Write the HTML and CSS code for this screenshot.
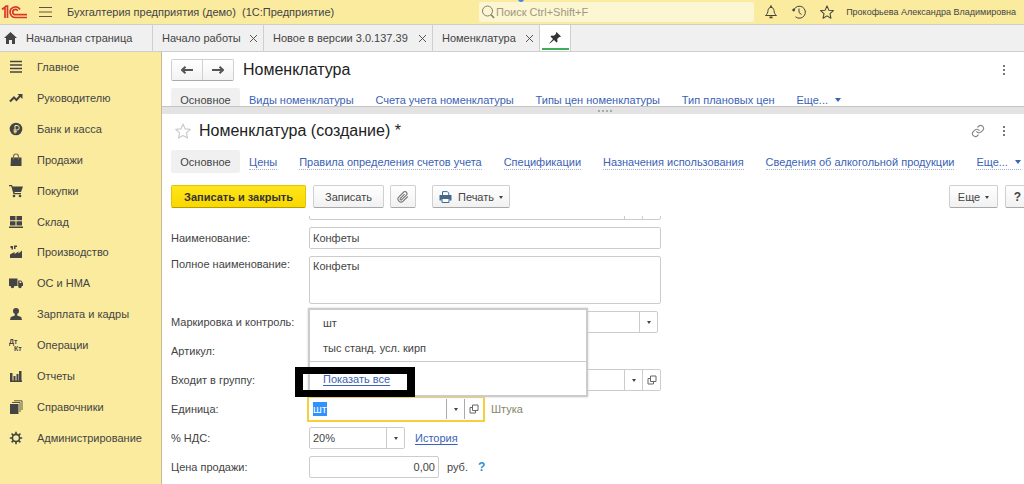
FILE: index.html
```html
<!DOCTYPE html>
<html lang="ru">
<head>
<meta charset="utf-8">
<title>Номенклатура (создание)</title>
<link rel="stylesheet" href="styles.css">
</head>
<body>
<svg class="defs" aria-hidden="true">
  <symbol id="open" viewBox="0 0 10 10"><path d="M3.500 1h5.500v5.500H3.500zM3.500 3.500H1V9h5.500V6.500" fill="none" stroke="#666" stroke-width="1"/></symbol>
  <symbol id="star" viewBox="0 0 16 16"><path d="M8 1l2.100 4.900 5.200.5-3.900 3.500 1.100 5.200L8 12.400l-4.500 2.700 1.100-5.200L.7 6.400l5.200-.5z" fill="none" stroke="currentColor" stroke-width="1.2" stroke-linejoin="round"/></symbol>
</svg>
<header class="topbar">
  <svg class="logo" viewBox="0 0 26 14" fill="none" stroke="#d9382b" stroke-width="1.700"><path d="M1 4.500l3-2.500v11M6.500 13V1.200H4.500"/><path d="M19 4.500A5.300 5.300 0 1 0 14.500 12.500H26"/><path d="M16.700 6A2.600 2.600 0 1 0 14.500 9.700H26"/></svg>
  <button class="plain" aria-label="Меню"><svg width="13" height="12" stroke="#5c573e" stroke-width="1"><path d="M0 1.500h13M0 6h13M0 10.500h13"/></svg></button>
  <span class="app-title">Бухгалтерия предприятия (демо)&nbsp; (1С:Предприятие)</span>
  <label class="search">
    <svg width="14" height="14" viewBox="0 0 14 14" fill="none" stroke="#85806a"><circle cx="6.500" cy="6" r="5"/><path d="M10 9.500l3 3.500" stroke-width="1.600"/></svg>
    <input type="text" placeholder="Поиск Ctrl+Shift+F" aria-label="Поиск">
    <i class="search-mark"></i>
  </label>
  <div class="top-icons">
    <button class="plain" aria-label="Уведомления"><svg width="14" height="14" viewBox="0 0 14 14" fill="none" stroke="#444"><path d="M1.500 10.500h11c-2-1.500-2.300-3-2.500-5C9.800 3.500 8.500 2.300 7 2.300S4.200 3.500 4 5.500c-.2 2-.5 3.500-2.500 5z"/><path d="M7 .5v2M5.500 12.300h3" stroke-width="1.800"/></svg></button>
    <button class="plain" aria-label="История"><svg width="14" height="14" viewBox="0 0 14 14" fill="none" stroke="#444"><path d="M2 4.500A6 6 0 1 1 3.500 11.800M7 3.500V7.500l2.500 2"/><circle cx="1.700" cy="5" r="1" fill="#444"/></svg></button>
    <button class="plain" aria-label="Избранное"><svg width="14" height="14"><use href="#star"/></svg></button>
  </div>
  <span class="user">Прокофьева Александра Владимировна</span>
</header>
<div class="tabs">
  <div class="tab tab-home"><svg width="13" height="12" viewBox="0 0 13 12" fill="#444"><path d="M6.500 0L0 6h2v6h3V8h3v4h3V6h2z"/></svg><span>Начальная страница</span></div>
  <div class="tab tab-start"><span>Начало работы</span><button class="close" aria-label="Закрыть"></button></div>
  <div class="tab tab-news"><span>Новое в версии 3.0.137.39</span><button class="close" aria-label="Закрыть"></button></div>
  <div class="tab tab-list"><span>Номенклатура</span><button class="close" aria-label="Закрыть"></button></div>
  <button class="tab tab-pin" aria-label="Закрепить"><svg width="12" height="12" viewBox="0 0 12 12"><path d="M7.500 0L12 4.500l-1 .6-.8-.2-2 2.200.3 2.400-1 1L5 8 .8 11.600.3 11.200 4 7 1.500 4.500l1-1 2.400.3 2.200-2L6.900.9z" fill="#333"/></svg></button>
</div>
<div class="body">
  <nav class="sidebar">
    <a href="#"><svg viewBox="0 0 14 14"><path d="M1 1.500h12M1 5h12M1 8.500h12M1 12h12" stroke="#444" stroke-width="1.400"/></svg>Главное</a>
    <a href="#"><svg viewBox="0 0 14 14"><path d="M1 10.500l4-4 2.500 2.500 4-4.500" fill="none" stroke="#444" stroke-width="2"/><path d="M8.500 3h5v5z"/></svg>Руководителю</a>
    <a href="#"><svg viewBox="0 0 14 14"><circle cx="7" cy="7" r="6.300"/><path d="M6 11.500v-8h2a2 2 0 0 1 0 4.500H4.500M4.500 9.800H8" fill="none" stroke="#faeb9e"/></svg>Банк и касса</a>
    <a href="#"><svg viewBox="0 0 14 14"><path d="M2 4.500h10.500V13h-11z"/><path d="M4.500 6.500V3.500a2.500 2.500 0 0 1 5 0v3" fill="none" stroke="#77704f" stroke-width="1.200"/></svg>Продажи</a>
    <a href="#"><svg viewBox="0 0 14 14"><path d="M0 1h3l.6 1.500H14L12 8H5.500l.2 1H12v1.200H4.500L2.300 2.200H0z"/><circle cx="5" cy="12" r="1.300"/><circle cx="11" cy="12" r="1.300"/></svg>Покупки</a>
    <a href="#"><svg viewBox="0 0 14 14"><path d="M1 1h5.500v4.200H1zM7.500 1H13v4.200H7.500zM1 6.200h5.500v4.300H1zM7.500 6.200H13v4.300H7.500zM0 11.500h14V13H0z"/></svg>Склад</a>
    <a href="#"><svg viewBox="0 0 14 14"><path d="M1 13V9.500l4.500-2.500v2L9.500 6.500v2L13 5.500V13zM1.500 1h2.500v3.500H2.500V3h-1zM5 .5h3v1.500H6.500V4H5z"/></svg>Производство</a>
    <a href="#"><svg viewBox="0 0 14 14"><path d="M0 2.500h8.500V10H0zM9.200 4.500h3L14 7v3H9.200z"/><path d="M10.500 5.500h1.300l.9 1.500h-2.200z" fill="#faeb9e"/><circle cx="3.500" cy="10.500" r="1.700"/><circle cx="11" cy="10.500" r="1.700"/></svg>ОС и НМА</a>
    <a href="#"><svg viewBox="0 0 14 14"><circle cx="7" cy="4" r="3"/><path d="M5.800 6h2.400v2.500l4 1.500.8 3H1l.8-3 4-1.500z"/></svg>Зарплата и кадры</a>
    <a href="#"><svg viewBox="0 0 14 14"><text class="entry-mark" x="0" y="6">Дт</text><text class="entry-mark" x="5" y="13">Кт</text></svg>Операции</a>
    <a href="#"><svg viewBox="0 0 14 14"><path d="M1 4h2.500v8H1zM4.500 7h2v5h-2zM7.500 5h2v7h-2zM10 2h2.500v10H10zM1 11.500h12V13H1z"/></svg>Отчеты</a>
    <a href="#"><svg viewBox="0 0 14 14"><path d="M1 4h8.500v10H1z"/><path d="M3 2.500h8V12M5 .8h8V10" fill="none" stroke="#5c573e" stroke-width="1"/></svg>Справочники</a>
    <a href="#"><svg viewBox="0 0 14 14"><circle cx="7" cy="7" r="3.600" fill="none" stroke="#444" stroke-width="1.600"/><path d="M7 .8v2.700M7 10.500v2.700M.8 7h2.700M10.500 7h2.700M2.600 2.600l2 2M9.400 9.400l2 2M2.600 11.400l2-2M9.400 4.600l2-2" stroke="#444" stroke-width="1.600"/></svg>Администрирование</a>
  </nav>
  <main class="main">
    <section class="list-pane">
      <div class="title-row">
        <div class="history-buttons">
          <button aria-label="Назад"><svg width="12" height="8" viewBox="0 0 12 8"><path d="M4.500.8L1 4l3.500 3.200M1 4h11" fill="none" stroke="#555" stroke-width="2"/></svg></button>
          <button aria-label="Вперед"><svg width="12" height="8" viewBox="0 0 12 8"><path d="M7.500.8L11 4 7.500 7.200M11 4H0" fill="none" stroke="#555" stroke-width="2"/></svg></button>
        </div>
        <h1>Номенклатура</h1>
        <button class="plain dots" aria-label="Еще"><i></i><i></i><i></i></button>
      </div>
      <div class="section-nav short">
        <span class="current">Основное</span>
        <div class="links">
          <a href="#">Виды номенклатуры</a><a href="#">Счета учета номенклатуры</a><a href="#">Типы цен номенклатуры</a><a href="#">Тип плановых цен</a><a href="#" class="more">Еще...<i class="caret"></i></a>
        </div>
      </div>
    </section>
    <div class="splitter"><i></i><i></i><i></i><i></i></div>
    <section class="item-pane">
      <div class="title-row">
        <button class="plain favorite" aria-label="В избранное"><svg width="16" height="16"><use href="#star"/></svg></button>
        <h1>Номенклатура (создание) *</h1>
        <button class="plain link-button" aria-label="Ссылка"><svg width="14" height="14" viewBox="0 0 24 24" fill="none" stroke="#888" stroke-width="2" stroke-linecap="round"><path d="M10 13a5 5 0 0 0 7.500.5l3-3a5 5 0 0 0-7-7l-1.700 1.700"/><path d="M14 11a5 5 0 0 0-7.500-.5l-3 3a5 5 0 0 0 7 7l1.700-1.700"/></svg></button>
        <button class="plain dots" aria-label="Еще"><i></i><i></i><i></i></button>
      </div>
      <div class="section-nav dotted">
        <span class="current">Основное</span>
        <div class="links">
          <a href="#">Цены</a><a href="#">Правила определения счетов учета</a><a href="#">Спецификации</a><a href="#">Назначения использования</a><a href="#">Сведения об алкогольной продукции</a><a href="#" class="more">Еще...<i class="caret"></i></a>
        </div>
      </div>
      <div class="toolbar">
        <button class="btn primary">Записать и закрыть</button>
        <button class="btn save">Записать</button>
        <button class="btn attach" aria-label="Прикрепить"><svg width="12" height="12" viewBox="0 0 24 24"><path d="M21.500 11l-9.200 9.200a6 6 0 0 1-8.500-8.500l9.200-9.200a4 4 0 0 1 5.700 5.700l-9.200 9.200a2 2 0 0 1-2.800-2.800l8.500-8.500" fill="none" stroke="#777" stroke-width="2.200"/></svg></button>
        <button class="btn print"><svg width="13" height="12" viewBox="0 0 13 12"><path d="M3.500 4V.6h4.800l1.500 1.500V4" fill="#fff" stroke="#416a8c"/><path d="M.5 4h12v5.500h-2V8h-8v1.500h-2z" fill="#416a8c"/><path d="M3 7.500h7v4H3z" fill="#fff" stroke="#416a8c"/></svg>Печать<i class="caret"></i></button>
        <button class="btn extra">Еще<i class="caret"></i></button>
        <button class="btn help">?</button>
      </div>
      <form class="form">
        <span></span><div class="field wide above"><input type="text" aria-label="Группа"><button type="button" aria-label="Выбрать"></button><button type="button" aria-label="Открыть"></button></div>
        <label for="name">Наименование:</label><div class="field wide"><input id="name" type="text" value="Конфеты"></div>
        <label for="full" class="top-label">Полное наименование:</label><div class="field wide tall"><textarea id="full">Конфеты</textarea></div>
        <label for="mark">Маркировка и контроль:</label><div class="field mark"><input id="mark" type="text"><button type="button" aria-label="Выбрать"><i class="caret"></i></button></div>
        <label for="art">Артикул:</label><div class="field art"><input id="art" type="text"></div>
        <label for="group">Входит в группу:</label><div class="field wide"><input id="group" type="text"><button type="button" aria-label="Выбрать"><i class="caret"></i></button><button type="button" aria-label="Открыть"><svg width="10" height="10"><use href="#open"/></svg></button></div>
        <label for="unit">Единица:</label>
        <div class="cell">
          <div class="unit-anchor">
            <div class="field unit"><label for="unit" class="selected">шт</label><input id="unit" type="text"><button type="button" aria-label="Выбрать"><i class="caret"></i></button><button type="button" aria-label="Открыть"><svg width="10" height="10"><use href="#open"/></svg></button></div>
            <div class="popup">
              <ul><li>шт</li><li>тыс станд. усл. кирп</li></ul>
              <div class="popup-footer"><a href="#">Показать все</a></div>
              <div class="marker"></div>
            </div>
          </div>
          <span class="hint">Штука</span>
        </div>
        <label for="vat">% НДС:</label><div class="cell"><div class="field vat"><input id="vat" type="text" value="20%"><button type="button" aria-label="Выбрать"><i class="caret"></i></button></div><a href="#" class="underlined">История</a></div>
        <label for="price">Цена продажи:</label><div class="cell"><div class="field price"><input id="price" type="text" value="0,00"></div><span class="currency">руб.</span><a href="#" class="question">?</a></div>
      </form>
    </section>
  </main>
</div>
</body>
</html>
```
FILE: styles.css
```css
* { box-sizing: border-box; }
body {
  margin: 0;
  height: 100vh;
  display: flex;
  flex-direction: column;
  overflow: hidden;
  font: 11px/16px "Liberation Sans", Arial, sans-serif;
  color: #444;
  background: #fff;
}
button, input, textarea { font: inherit; color: inherit; margin: 0; }
button { padding: 0; }
svg { flex: none; display: block; }
.defs { position: absolute; width: 0; height: 0; }
a { color: #3a62b5; text-decoration: none; white-space: nowrap; }
.plain { border: 0; background: none; display: flex; align-items: center; justify-content: center; }

.topbar {
  flex: none;
  height: 24px;
  display: flex;
  align-items: center;
  padding: 0 8px 0 1px;
  background: #faeb9e;
}
.logo { width: 26px; height: 14px; margin-right: 12px; }
.app-title { margin-left: 15px; flex: 0 0 412px; white-space: nowrap; }
.search {
  position: relative;
  flex: 1;
  min-width: 0;
  height: 20px;
  display: flex;
  align-items: center;
  gap: 1px;
  padding-left: 2px;
  border-radius: 2px;
  background: #fdf6d3;
}
.search input { flex: 1; min-width: 0; border: 0; padding: 0; background: none; outline: 0; }
.search input::placeholder { color: #9d987f; opacity: 1; }
.search-mark { position: absolute; left: 39px; top: -3px; width: 6px; height: 3px; border-radius: 0 0 3px 3px; background: #4285f4; }
.top-icons { display: flex; gap: 14px; margin: 0 12px 0 10px; }
.user { font-size: 9px; white-space: nowrap; }

.tabs {
  flex: none;
  display: flex;
  height: 28px;
  background: #f0f0f0;
  border-top: 1px solid #cfcfc8;
  border-bottom: 1px solid #cfcfcf;
}
.tab {
  display: flex;
  align-items: center;
  justify-content: space-between;
  padding: 0 6px 0 9px;
  border: 0;
  border-right: 1px solid #cfcfcf;
  white-space: nowrap;
}
.tab-home { width: 153px; padding-left: 4px; gap: 9px; justify-content: flex-start; }
.tab-start { width: 111px; }
.tab-news { width: 169px; }
.tab-list { width: 107px; }
.tab-pin { width: 31px; padding: 0; justify-content: center; background: linear-gradient(#3fae5a, #3fae5a) center bottom 1px / 27px 2px no-repeat #fff; }
.close {
  width: 7px;
  height: 7px;
  border: 0;
  background:
    linear-gradient(45deg, transparent 44%, #555 44% 56%, transparent 56%),
    linear-gradient(-45deg, transparent 44%, #555 44% 56%, transparent 56%);
}

.body { flex: 1; min-height: 0; display: flex; }
.sidebar {
  flex: 0 0 161px;
  display: flex;
  flex-direction: column;
  padding: 0 0 31px 9px;
  background: #faeb9e;
}
.sidebar a { flex: 1; min-height: 0; display: flex; align-items: center; gap: 14px; color: #444; }
.sidebar svg { width: 14px; height: 14px; fill: #444; }
.entry-mark { font: bold 7px "Liberation Sans", Arial, sans-serif; }
.main {
  flex: 1;
  min-width: 0;
  display: flex;
  flex-direction: column;
  overflow: hidden;
  border-left: 1px solid #c5b898;
}
.list-pane { flex: none; height: 54px; padding: 7px 3px 0 9px; overflow: hidden; }
.title-row { display: flex; align-items: center; height: 22px; padding-right: 12px; }
h1 { flex: 1; margin: 0; font-size: 16px; line-height: 22px; font-weight: normal; color: #222; }
.history-buttons { display: flex; margin-right: 9px; border: 1px solid #cfcfcf; border-bottom-color: #aaa; border-radius: 2px; }
.history-buttons button { width: 30px; height: 20px; display: flex; align-items: center; justify-content: center; border: 0; background: linear-gradient(#fff, #f2f2f2); }
.history-buttons button + button { border-left: 1px solid #d0d0d0; width: 31px; }
.dots { flex-direction: column; gap: 2px; width: 10px; }
.dots i { width: 2px; height: 2px; background: #777; }
.section-nav { display: flex; align-items: center; margin-top: 7px; }
.section-nav .current { flex: none; width: 69px; height: 23px; line-height: 24px; text-align: center; background: #f0f0f0; border-radius: 2px; }
.links { flex: 1; display: flex; justify-content: space-between; margin-left: 9px; line-height: 14px; }
.short { max-width: 670px; }
.dotted .links a { border-bottom: 1px dotted #9db1db; margin-top: 1px; }
.caret { display: inline-block; width: 0; height: 0; border: 3px solid transparent; border-top-color: currentColor; border-bottom-width: 0; }
.more .caret { margin-left: 7px; border-top-width: 4px; vertical-align: 2px; }
.splitter {
  flex: none;
  height: 8px;
  display: flex;
  align-items: center;
  justify-content: center;
  gap: 2px;
  padding-left: 23px;
  background: #e3e3e3;
  border-top: 1px solid #c4c4c4;
}
.splitter i { width: 2px; height: 2px; background: #aaa; }

.item-pane { flex: 1; min-height: 0; display: flex; flex-direction: column; padding: 6px 0 0 9px; }
.item-pane > .title-row { flex: none; margin-bottom: 1px; padding-right: 15px; }
.item-pane > .section-nav { flex: none; margin-right: 3px; }
.favorite { color: #ccc; margin: 0 8px 0 4px; }
.link-button { margin-right: 14px; }
.toolbar { flex: none; display: flex; margin-top: 12px; margin-right: -6px; }
.btn {
  display: flex;
  align-items: center;
  justify-content: center;
  height: 23px;
  border: 1px solid #cfcfcf;
  border-bottom-color: #a8a8a8;
  border-radius: 2px;
  background: linear-gradient(#fff, #f1f1f1);
}
.btn .caret { margin-left: 5px; border-width: 2px; border-top-width: 3px; border-bottom-width: 0; margin-top: 2px; }
.primary { width: 135px; font-weight: bold; color: #333; background: linear-gradient(#ffe51a, #f8d800); border-color: #e3c400; border-bottom-color: #b79e00; }
.save { width: 71px; margin-left: 7px; }
.attach { width: 26px; margin-left: 6px; }
.print { width: 78px; margin-left: 16px; }
.print svg { margin-right: 6px; }
.extra { width: 49px; margin-left: auto; }
.help { width: 25px; margin-left: 7px; font-size: 12px; font-weight: bold; }

.form {
  flex: 1;
  min-height: 0;
  display: grid;
  grid-template-columns: 138px 1fr;
  grid-auto-rows: max-content;
  row-gap: 7px;
  margin-top: 8px;
  overflow: hidden;
}
.form > label { align-self: center; white-space: nowrap; }
.form > .top-label { align-self: start; }
.field {
  display: flex;
  height: 22px;
  border: 1px solid #ccc;
  border-radius: 2px;
  background: #fff;
}
.field input, .field textarea { flex: 1; width: 0; min-width: 0; border: 0; padding: 0 3px; background: none; outline: 0; resize: none; }
.field button { width: 18px; display: flex; align-items: center; justify-content: center; border: 0; border-left: 1px solid #ccc; background: none; }
.field .caret { border-width: 2px; border-top-width: 3px; border-bottom-width: 0; }
.wide { width: 352px; }
.above { margin-top: -18px; }
.tall { height: 48px; }
.tall textarea { padding-top: 1px; }
.mark { width: 349px; }
.art { width: 200px; }
.cell { display: flex; align-items: center; }
.unit-anchor { position: relative; margin: -2px 6px -2px -2px; }
.unit { width: 178px; height: 26px; padding: 1px; align-items: center; border: 2px solid #f7cf3c; border-radius: 0; }
.unit button { height: 20px; border-color: #aaa; }
.selected { margin-left: 3px; line-height: 14px; background: #3390ff; color: #fff; }
.popup {
  position: absolute;
  left: 1px;
  bottom: 25px;
  width: 280px;
  background: #fff;
  border: 2px solid #ccc;
  box-shadow: 0 0 2px #ccc;
  z-index: 1;
}
.popup ul { list-style: none; margin: 0; padding: 1px 0 0 13px; border-bottom: 1px solid #ccc; }
.popup li { line-height: 25px; }
.popup-footer { padding: 2px 0 0 13px; line-height: 31px; }
.popup-footer a, .underlined { text-decoration: underline; text-underline-offset: 2px; }
.marker { position: absolute; left: -15px; bottom: -2px; width: 120px; height: 30px; border: 7px solid #000; border-width: 7px 8px; }
.hint { color: #85856a; }
.vat { width: 96px; }
.vat + .underlined { margin-left: 10px; }
.price { width: 130px; }
.price input { text-align: right; }
.currency { margin-left: 8px; }
.question { margin-left: 10px; font-weight: bold; font-size: 12px; color: #2f8fd0; }
```
